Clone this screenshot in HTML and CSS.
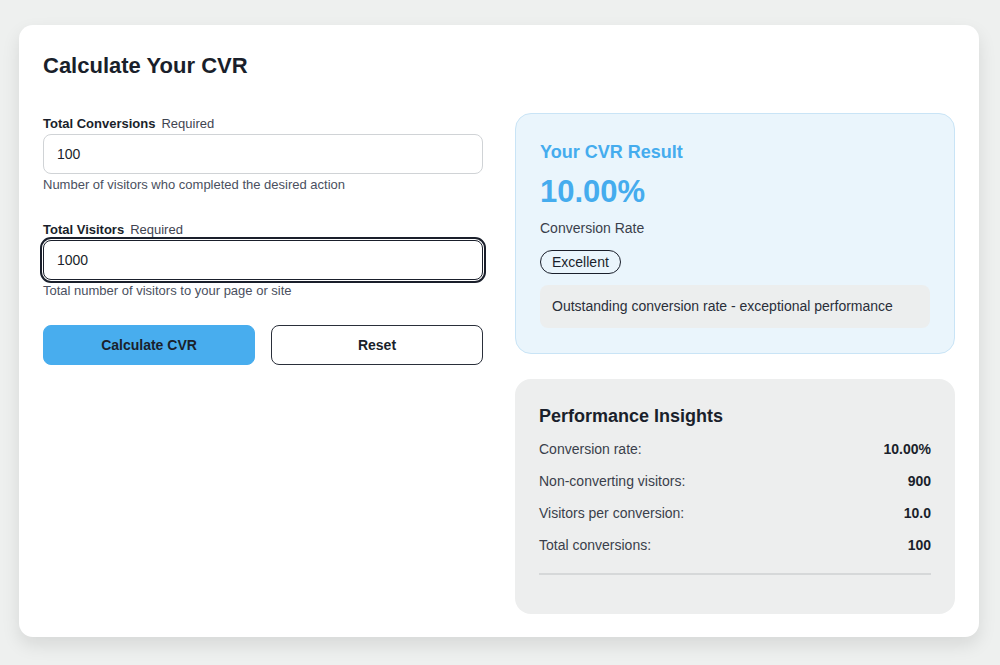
FILE: index.html
```html
<!DOCTYPE html>
<html lang="en">
<head>
<meta charset="utf-8">
<title>CVR Calculator</title>
<link rel="stylesheet" href="styles.css">
</head>
<body>
<div class="card">
  <h1 class="title">Calculate Your CVR</h1>
  <div class="grid">
    <div class="form">
      <div class="field">
        <label class="label"><span class="label-name">Total Conversions</span><span class="req">Required</span></label>
        <input class="input" type="text" value="100">
        <p class="help">Number of visitors who completed the desired action</p>
      </div>
      <div class="field">
        <label class="label"><span class="label-name">Total Visitors</span><span class="req">Required</span></label>
        <input class="input focused" type="text" value="1000">
        <p class="help">Total number of visitors to your page or site</p>
      </div>
      <div class="actions">
        <button class="btn primary">Calculate CVR</button>
        <button class="btn secondary">Reset</button>
      </div>
    </div>
    <div class="side">
      <div class="result">
        <h2 class="result-title">Your CVR Result</h2>
        <div class="result-value">10.00%</div>
        <div class="result-sub">Conversion Rate</div>
        <span class="badge">Excellent</span>
        <div class="message">Outstanding conversion rate - exceptional performance</div>
      </div>
      <div class="insights">
        <h3 class="insights-title">Performance Insights</h3>
        <div class="row"><span>Conversion rate:</span><strong>10.00%</strong></div>
        <div class="row"><span>Non-converting visitors:</span><strong>900</strong></div>
        <div class="row"><span>Visitors per conversion:</span><strong>10.0</strong></div>
        <div class="row"><span>Total conversions:</span><strong>100</strong></div>
        <div class="rule"></div>
      </div>
    </div>
  </div>
</div>
</body>
</html>
```
FILE: styles.css
```css
* { box-sizing: border-box; }
html, body { margin: 0; padding: 0; }
body {
  background: #eef0ef;
  font-family: "Liberation Sans", Arial, sans-serif;
  color: #1a1f2b;
  padding: 25px 21px 28px 19px;
}
.card {
  background: #ffffff;
  border-radius: 14px;
  box-shadow: 0 8px 18px rgba(0,0,0,0.10);
  padding: 24px 24px 24px 24px;
  height: 612px;
}
.title {
  margin: 3px 0 0 0;
  font-size: 22px;
  line-height: 28px;
  font-weight: 700;
  color: #1a1f2b;
}
.grid {
  display: grid;
  grid-template-columns: 440px 440px;
  column-gap: 32px;
  margin-top: 33px;
}
.form { padding-top: 4px; }
.field { margin-bottom: 30px; }
.field + .field { margin-bottom: 26px; }
.label {
  display: flex;
  align-items: baseline;
  gap: 6px;
  font-size: 13px;
  line-height: 14px;
  margin-bottom: 3px;
}
.label-name { font-weight: 700; color: #1a1f2b; }
.req { color: #3f4451; font-weight: 400; }
.input {
  display: block;
  width: 100%;
  height: 40px;
  border: 1px solid #d0d3d6;
  border-radius: 8px;
  padding: 0 13px;
  font-family: "Liberation Sans", Arial, sans-serif;
  font-size: 14px;
  color: #1a1f2b;
  background: #fff;
}
.input.focused {
  border-color: #1a1f2b;
  outline: 2px solid #1a1f2b;
  outline-offset: 1px;
}
.help {
  margin: 3px 0 0 0;
  font-size: 13px;
  line-height: 16px;
  color: #4a5060;
}
.actions {
  display: grid;
  grid-template-columns: 1fr 1fr;
  gap: 16px;
}
.btn {
  height: 40px;
  border-radius: 8px;
  font-family: "Liberation Sans", Arial, sans-serif;
  font-size: 14px;
  font-weight: 700;
  color: #1a1f2b;
  cursor: pointer;
}
.primary { background: #48adee; border: 1px solid #48adee; }
.secondary { background: #fff; border: 1px solid #2a2f3a; }
.side {
  display: flex;
  flex-direction: column;
  gap: 25px;
}
.result {
  background: #eaf5fc;
  border: 1px solid #c9e4f6;
  border-radius: 16px;
  padding: 27px 24px 24px 24px;
  height: 241px;
}
.result-title {
  margin: 0;
  font-size: 18px;
  line-height: 22px;
  font-weight: 700;
  color: #45acee;
}
.result-value {
  margin-top: 11px;
  font-size: 31px;
  line-height: 36px;
  font-weight: 700;
  color: #45acee;
}
.result-sub {
  margin-top: 9px;
  font-size: 14px;
  line-height: 18px;
  color: #3a3f4b;
}
.badge {
  display: inline-block;
  margin-top: 13px;
  padding: 2px 11px;
  border: 1px solid #1a1f2b;
  border-radius: 999px;
  font-size: 14px;
  line-height: 18px;
  color: #1a1f2b;
}
.message {
  margin-top: 11px;
  background: #eceeee;
  border-radius: 8px;
  padding: 13px 12px;
  font-size: 14px;
  line-height: 17px;
  color: #2a2f3a;
}
.insights {
  background: #edeeee;
  border-radius: 16px;
  padding: 26px 24px 38px 24px;
  height: 235px;
}
.insights-title {
  margin: 0 0 13px 0;
  font-size: 18px;
  line-height: 22px;
  font-weight: 700;
  color: #1a1f2b;
}
.row {
  display: flex;
  justify-content: space-between;
  font-size: 14px;
  line-height: 18px;
  height: 32px;
  color: #3a3f4b;
}
.row strong { color: #1a1f2b; font-weight: 700; }
.rule {
  margin-top: 5px;
  height: 2px;
  background: #d6d8d9;
}
```
